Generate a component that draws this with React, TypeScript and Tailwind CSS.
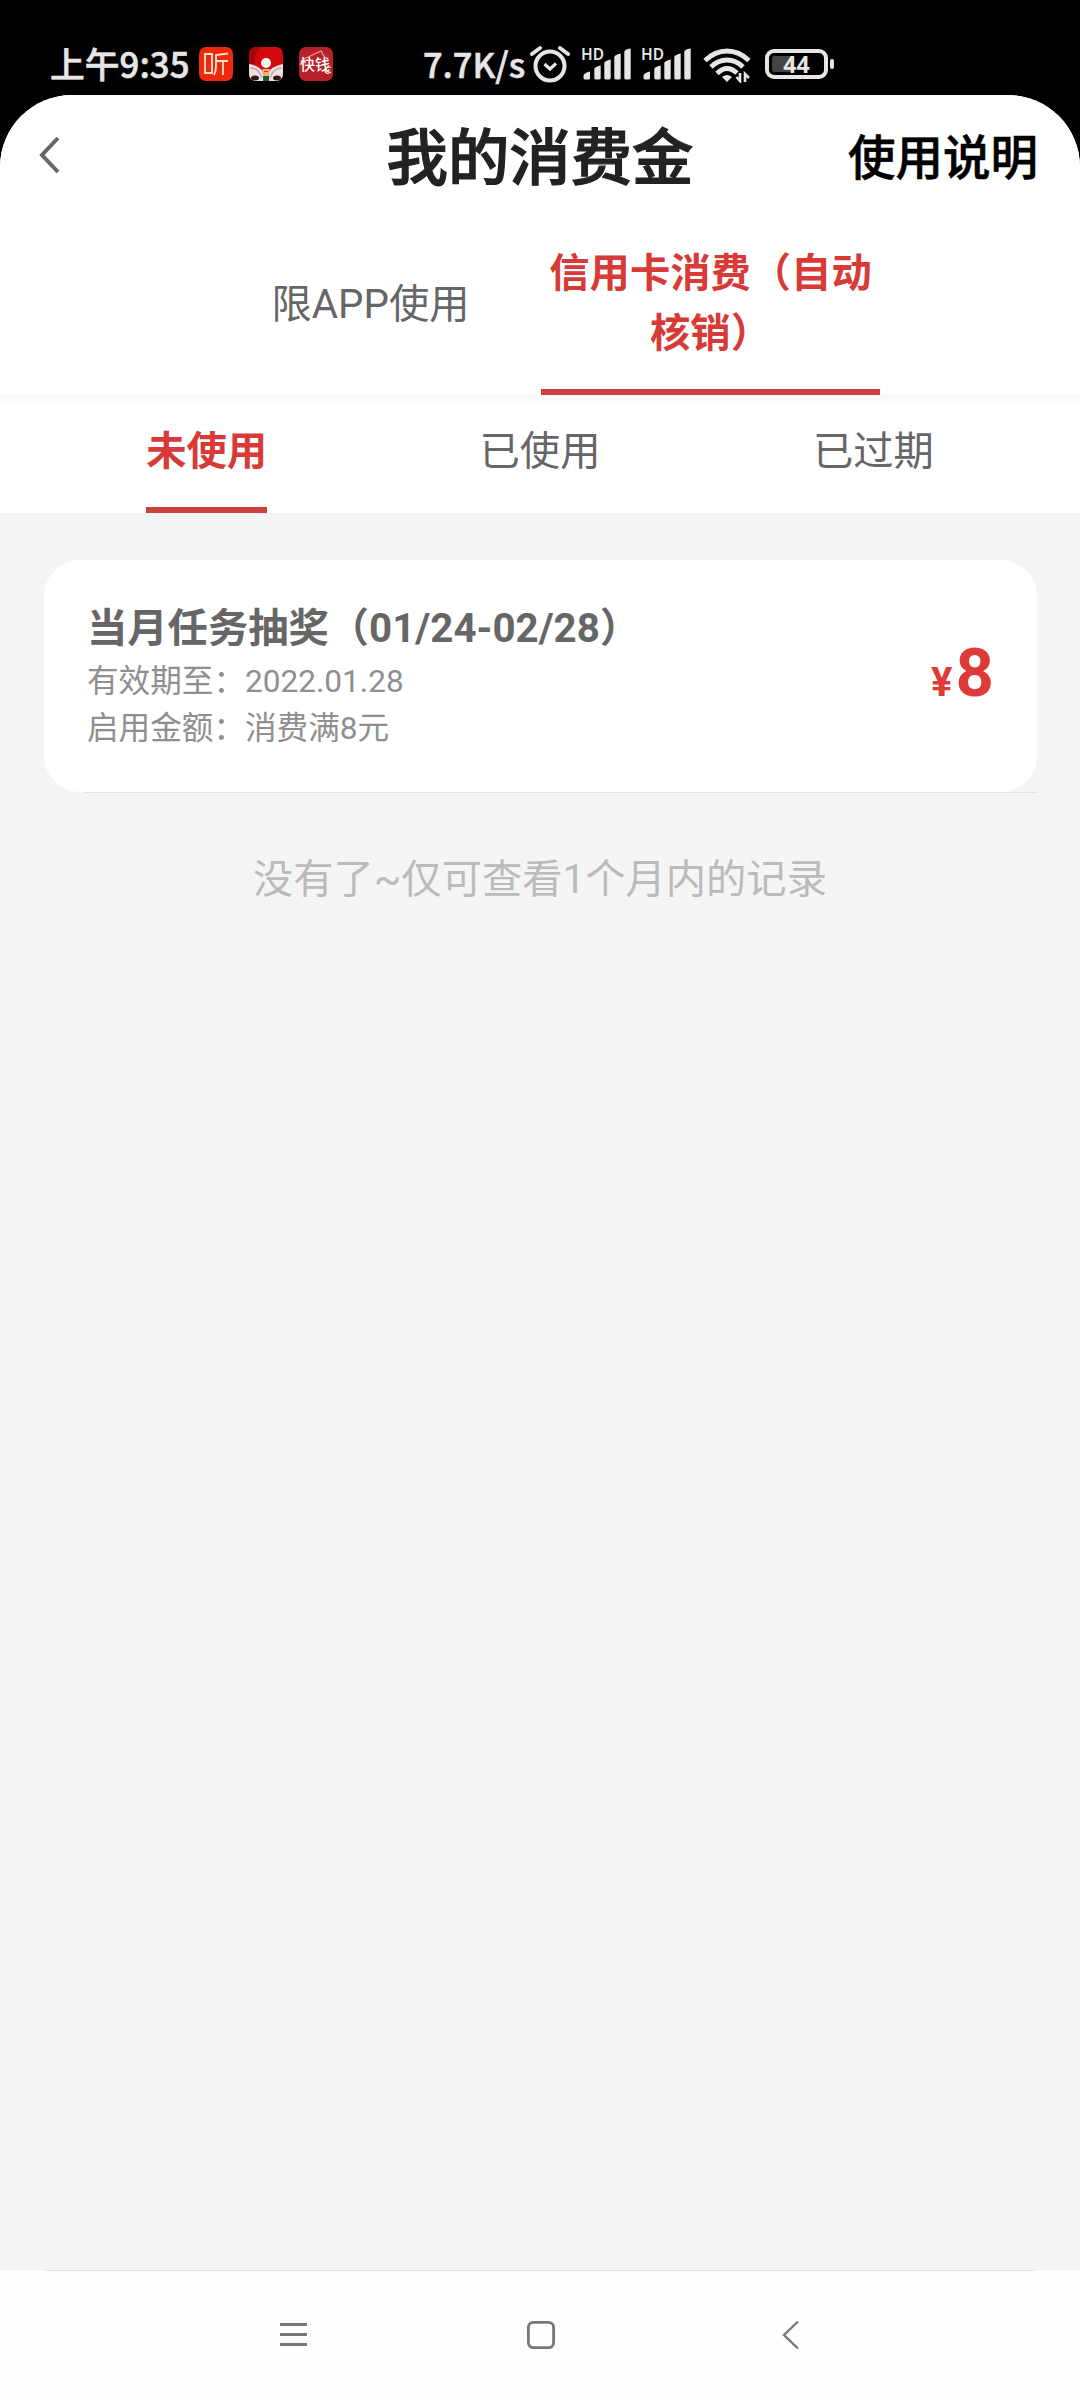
import React from 'react'

type TabProps = {
  label: string
  active?: boolean
}

const SignalBars = () => {
  return (
    <svg className="w-[50px] h-[42px] shrink-0" viewBox="0 -8 50 42" fill="#e6e6e6">
      <text x="0" y="12" fontSize="16.500" fontWeight="600" fontFamily="Noto Sans, sans-serif" textLength="23" lengthAdjust="spacingAndGlyphs">HD</text>
      <path d="M2.500 30V28Q2.500 25 9 23.500V30Q9 31.500 7.500 31.500H4Q2.500 31.500 2.500 30Z" />
      <path d="M13.300 30V21Q13.300 19 19.700 17.500V30Q19.700 31.500 18 31.500H15Q13.300 31.500 13.300 30Z" />
      <path d="M23.300 30V15Q23.300 13 29.700 11.500V30Q29.700 31.500 28 31.500H25Q23.300 31.500 23.300 30Z" />
      <path d="M33.300 30V9Q33.300 7 39.700 5.500V30Q39.700 31.500 38 31.500H35Q33.300 31.500 33.300 30Z" />
      <path d="M43.300 30V4Q43.300 1 49.700 0.500V30Q49.700 31.500 48 31.500H45Q43.300 31.500 43.300 30Z" />
    </svg>
  )
}

const StatusBar = () => {
  return (
    <div className="h-[95px] pt-[33px] flex items-start text-[#e6e6e6] font-['Noto_Sans_CJK_SC',sans-serif]">
      <div className="ml-[50px] w-[149px] h-[60px] leading-[60px] text-[34.800px] font-medium whitespace-nowrap [-webkit-text-stroke:0.6px_#e6e6e6]">上午9:35</div>
      <div className="mt-[14px] flex gap-4">
        <svg className="w-[34px] h-[34px]" viewBox="0 0 34 34" fill="none">
          <rect width="34" height="34" rx="7" fill="#f0280f" />
          <path d="M6 7H13V26H6ZM29 6.500L17 8V19Q17 24 15 28M17 14H29M24 14V28" stroke="#ffe9c8" strokeWidth="1.800" />
        </svg>
        <svg className="w-[34px] h-[34px]" viewBox="0 0 34 34">
          <defs>
            <clipPath id="lion"><rect width="34" height="34" rx="7" /></clipPath>
          </defs>
          <g clipPath="url(#lion)">
            <rect width="34" height="34" fill="#d3080c" />
            <path d="M0 0H12Q4 8 6 17H0Z" fill="#a80508" />
            <path d="M0 17Q12 19 15 27L17 34H0ZM34 17Q22 19 19 27L17 34H34Z" fill="#efe0e2" />
            <path d="M1 21Q10 21 13 31M33 21Q24 21 21 31" stroke="#c9a3b4" strokeWidth="1.500" fill="none" />
            <ellipse cx="6" cy="31" rx="4" ry="2.500" fill="#2c1a12" />
            <ellipse cx="28" cy="31" rx="4" ry="2.500" fill="#2c1a12" />
            <circle cx="17" cy="16" r="5" fill="#fff" />
            <path d="M13 22H21L20 29H14Z" fill="#e8b078" />
            <path d="M15 24.500H19" stroke="#c23a20" strokeWidth="1.200" />
            <path d="M14 29H20V34H14Z" fill="#1e5a35" />
          </g>
        </svg>
        <svg className="w-[34px] h-[34px]" viewBox="0 0 34 34">
          <rect width="34" height="34" rx="7" fill="#b8202a" />
          <path d="M5 12L22 4L26 11" fill="none" stroke="#e9a0a0" strokeWidth="1.200" />
          <text x="1" y="23" fontSize="15" fontWeight="500" fill="#fff">快钱</text>
          <path d="M32 20Q26 20 26 24Q27 28 32 25" fill="none" stroke="#fff" strokeWidth="1.200" />
        </svg>
      </div>
      <div className="ml-[90px] w-[107px] h-[60px] leading-[60px] text-[34.400px] font-medium whitespace-nowrap [-webkit-text-stroke:0.6px_#e6e6e6]">7.7K/s</div>
      <svg className="mt-[12px] w-[40px] h-[38px] shrink-0" viewBox="0 0 40 38" fill="none" stroke="#e6e6e6">
        <circle cx="20" cy="21" r="14.500" strokeWidth="4" />
        <path d="M14.500 19L20 24L26 18.500" strokeWidth="3.200" />
        <path d="M2 9L10 3M38 9L30 3" strokeWidth="3.800" strokeLinecap="round" />
      </svg>
      <div className="mt-[7px] ml-[11px] flex gap-[10px]">
        <SignalBars />
        <SignalBars />
      </div>
      <svg className="mt-[14px] ml-[12px] w-[48px] h-[36px] shrink-0" viewBox="0 0 48 36" fill="none" stroke="#e6e6e6" strokeWidth="4.800">
        <path d="M2 13.500Q12 4 24 4T46 13.500" />
        <path d="M8 20Q15 13 24 13T40 20" />
        <path d="M14 26.500Q19 21.500 24 21.500T34 26" />
        <path d="M19 30Q24 26 29 30L24 35Z" fill="#e6e6e6" stroke="none" />
        <path d="M37 26V34L33.500 30M42 35V27L46 31" strokeWidth="2.600" />
      </svg>
      <div className="mt-[16px] ml-[14px] flex items-center">
        <div className="w-[63px] h-[30px] rounded-[9px] border-4 border-[#e6e6e6] p-[3px] relative">
          <div className="w-5 h-4 bg-[#444] rounded-[2px]" />
          <span className="absolute inset-0 text-center leading-[23px] text-[23px] font-bold font-['Noto_Sans',sans-serif]">44</span>
        </div>
        <div className="ml-[2px] w-[4px] h-[10px] rounded-full bg-[#e6e6e6]" />
      </div>
    </div>
  )
}

const Header = () => {
  return (
    <div className="h-[135px] relative flex items-start justify-between">
      <svg className="mt-[39px] ml-[37px] w-[24px] h-[42px]" viewBox="0 0 24 42" fill="none" stroke="#666" strokeWidth="4">
        <path d="M21 4L5 21L21 38" />
      </svg>
      <h1 className="absolute inset-x-0 top-[19px] text-center text-[61.400px] leading-[90px] font-medium text-[#222] [-webkit-text-stroke:1.2px_#222]">我的消费金</h1>
      <span className="relative mr-[42px] mt-[29px] text-[47.500px] leading-[70px] font-medium text-black [-webkit-text-stroke:0.6px_#000]">使用说明</span>
    </div>
  )
}

const SubTab = ({ label, active }: TabProps) => {
  return (
    <div className="flex-1 flex justify-center">
      <div className={active ? 'h-full border-b-[6px] border-[#cd4040] text-[#d83a38] font-bold' : 'text-[#666]'}>{label}</div>
    </div>
  )
}

const Coupon = () => {
  return (
    <div className="ml-[44px] mr-[43px] mt-[47px]">
      <div className="h-[232px] bg-white rounded-[36px] px-[43px] flex items-start justify-between">
        <div className="pt-[39px]">
          <div className="h-[59px] leading-[59px] text-[40.300px] font-bold text-[#666]">当月任务抽奖（01/24-02/28）</div>
          <div className="h-[47px] leading-[47px] text-[31.600px] text-[#8f8f8f]">有效期至：2022.01.28</div>
          <div className="h-[47px] leading-[47px] text-[31.600px] text-[#8f8f8f]">启用金额：消费满8元</div>
        </div>
        <div className="mt-[73px] leading-[80px] font-bold text-[#e03a38] whitespace-nowrap">
          <span className="text-[40px] mr-[3px]">¥</span>
          <span className="text-[67px]">8</span>
        </div>
      </div>
      <div className="ml-10 h-px bg-[#e4e4e4]" />
    </div>
  )
}

const NavBar = () => {
  return (
    <div className="h-[130px] bg-[#fefefe]">
      <div className="mx-[45px] h-px bg-[#e2e2e2]" />
      <div className="pt-[48px] pl-[278px] flex text-[#777]">
        <svg className="w-8 h-8" viewBox="0 0 32 32" stroke="currentColor" strokeWidth="2.800">
          <path d="M2 5.500H29M2 15.500H29M2 25.500H29" />
        </svg>
        <svg className="ml-[215px] w-8 h-8" viewBox="0 0 32 32" fill="none" stroke="currentColor" strokeWidth="2.800">
          <rect x="3.400" y="3.400" width="25.200" height="25.200" rx="5" />
        </svg>
        <svg className="ml-[222px] w-8 h-8" viewBox="0 0 32 32" fill="none" stroke="currentColor" strokeWidth="2.400">
          <path d="M19 2.500L5 16L19 29.500" />
        </svg>
      </div>
    </div>
  )
}

const App = () => {
  return (
    <div className="w-[1080px] h-[2400px] bg-black flex flex-col overflow-hidden">
      <StatusBar />
      <div className="flex-1 flex flex-col rounded-t-[72px] bg-[#f5f5f5] overflow-hidden font-['Roboto','Noto_Sans_CJK_SC',sans-serif]">
        <div className="bg-white">
          <Header />
          <div className="h-[165px] pl-[201px] pr-[199px] flex text-[40.300px] leading-[60px] text-center">
            <div className="flex-1 pt-[45px] text-[#666]">限APP使用</div>
            <div className="flex-1 mx-px pt-[14px] border-b-[6px] border-[#cd4040] text-[#d83a38] font-bold">
              信用卡消费（自动
              <br />
              核销）
            </div>
          </div>
          <div className="h-[118px] bg-linear-to-b from-[#f8f8f8] to-white to-[10px] px-[40px] flex text-[40.300px] leading-[114px]">
            <SubTab label="未使用" active />
            <SubTab label="已使用" />
            <SubTab label="已过期" />
          </div>
        </div>
        <Coupon />
        <div className="mt-[57px] text-center text-[40.300px] leading-[60px] text-[#bbb]">没有了~仅可查看1个月内的记录</div>
        <div className="flex-1" />
        <NavBar />
      </div>
    </div>
  )
}

export default App
